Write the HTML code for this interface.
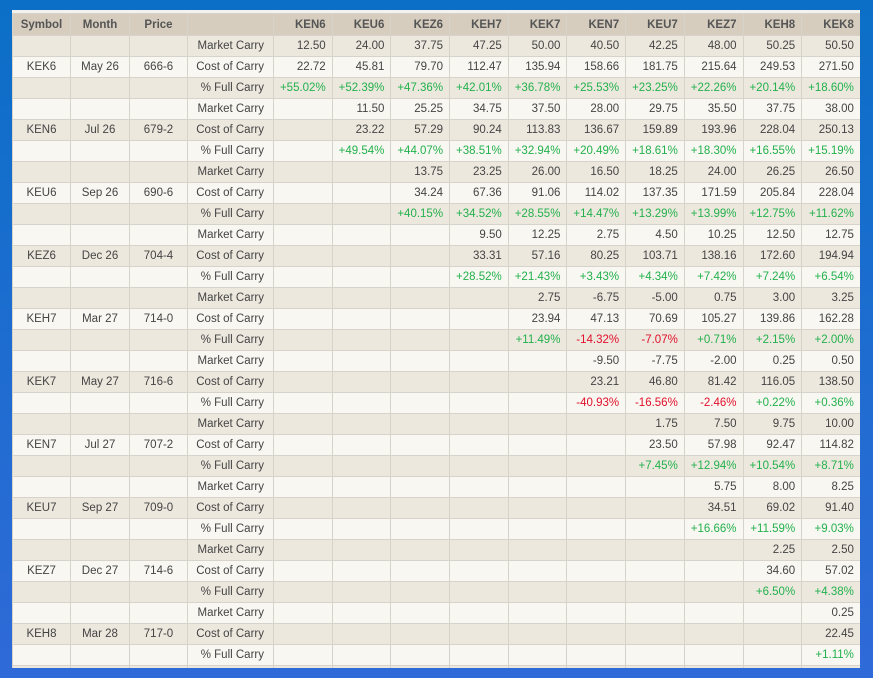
<!DOCTYPE html>
<html><head><meta charset="utf-8"><style>
html,body{margin:0;padding:0}
body{width:873px;height:678px;overflow:hidden;background:linear-gradient(#0b6fc7,#2f6ad8);font-family:"Liberation Sans",sans-serif;}
.card{position:absolute;left:12px;top:10px;width:848px;height:658px;overflow:hidden;background:#f9f7f2;border-top:3px solid #f4f2ee;box-sizing:border-box}
table{border-collapse:collapse;table-layout:fixed;width:848px;font-size:11.5px;color:#444}
td,th{border:1px solid #d8d3ca;height:20px;padding:0 6px 0 0;text-align:right;white-space:nowrap;overflow:hidden}
th{background:#d6cdbf;height:21px;font-weight:bold;color:#555}
tr:nth-child(even) td{background:#ede8de}
tr:nth-child(odd) td{background:#f9f7f2}
td.c,th.c{text-align:center;padding:0}
td.l{padding-right:9px}
.g{color:#22b14c}.r{color:#e0102a}
</style></head><body><div class="card"><table>
<colgroup><col style="width:58px"><col style="width:59px"><col style="width:58px"><col style="width:86px"><col span="10" style="width:58.7px"></colgroup>
<tr><th class="c">Symbol</th><th class="c">Month</th><th class="c">Price</th><th></th><th>KEN6</th><th>KEU6</th><th>KEZ6</th><th>KEH7</th><th>KEK7</th><th>KEN7</th><th>KEU7</th><th>KEZ7</th><th>KEH8</th><th>KEK8</th></tr>
<tr><td class="c"></td><td class="c"></td><td class="c"></td><td class="l">Market Carry</td><td>12.50</td><td>24.00</td><td>37.75</td><td>47.25</td><td>50.00</td><td>40.50</td><td>42.25</td><td>48.00</td><td>50.25</td><td>50.50</td></tr>
<tr><td class="c">KEK6</td><td class="c">May 26</td><td class="c">666-6</td><td class="l">Cost of Carry</td><td>22.72</td><td>45.81</td><td>79.70</td><td>112.47</td><td>135.94</td><td>158.66</td><td>181.75</td><td>215.64</td><td>249.53</td><td>271.50</td></tr>
<tr><td></td><td></td><td></td><td class="l">% Full Carry</td><td class="g">+55.02%</td><td class="g">+52.39%</td><td class="g">+47.36%</td><td class="g">+42.01%</td><td class="g">+36.78%</td><td class="g">+25.53%</td><td class="g">+23.25%</td><td class="g">+22.26%</td><td class="g">+20.14%</td><td class="g">+18.60%</td></tr>
<tr><td></td><td></td><td></td><td class="l">Market Carry</td><td></td><td>11.50</td><td>25.25</td><td>34.75</td><td>37.50</td><td>28.00</td><td>29.75</td><td>35.50</td><td>37.75</td><td>38.00</td></tr>
<tr><td class="c">KEN6</td><td class="c">Jul 26</td><td class="c">679-2</td><td class="l">Cost of Carry</td><td></td><td>23.22</td><td>57.29</td><td>90.24</td><td>113.83</td><td>136.67</td><td>159.89</td><td>193.96</td><td>228.04</td><td>250.13</td></tr>
<tr><td></td><td></td><td></td><td class="l">% Full Carry</td><td></td><td class="g">+49.54%</td><td class="g">+44.07%</td><td class="g">+38.51%</td><td class="g">+32.94%</td><td class="g">+20.49%</td><td class="g">+18.61%</td><td class="g">+18.30%</td><td class="g">+16.55%</td><td class="g">+15.19%</td></tr>
<tr><td></td><td></td><td></td><td class="l">Market Carry</td><td></td><td></td><td>13.75</td><td>23.25</td><td>26.00</td><td>16.50</td><td>18.25</td><td>24.00</td><td>26.25</td><td>26.50</td></tr>
<tr><td class="c">KEU6</td><td class="c">Sep 26</td><td class="c">690-6</td><td class="l">Cost of Carry</td><td></td><td></td><td>34.24</td><td>67.36</td><td>91.06</td><td>114.02</td><td>137.35</td><td>171.59</td><td>205.84</td><td>228.04</td></tr>
<tr><td></td><td></td><td></td><td class="l">% Full Carry</td><td></td><td></td><td class="g">+40.15%</td><td class="g">+34.52%</td><td class="g">+28.55%</td><td class="g">+14.47%</td><td class="g">+13.29%</td><td class="g">+13.99%</td><td class="g">+12.75%</td><td class="g">+11.62%</td></tr>
<tr><td></td><td></td><td></td><td class="l">Market Carry</td><td></td><td></td><td></td><td>9.50</td><td>12.25</td><td>2.75</td><td>4.50</td><td>10.25</td><td>12.50</td><td>12.75</td></tr>
<tr><td class="c">KEZ6</td><td class="c">Dec 26</td><td class="c">704-4</td><td class="l">Cost of Carry</td><td></td><td></td><td></td><td>33.31</td><td>57.16</td><td>80.25</td><td>103.71</td><td>138.16</td><td>172.60</td><td>194.94</td></tr>
<tr><td></td><td></td><td></td><td class="l">% Full Carry</td><td></td><td></td><td></td><td class="g">+28.52%</td><td class="g">+21.43%</td><td class="g">+3.43%</td><td class="g">+4.34%</td><td class="g">+7.42%</td><td class="g">+7.24%</td><td class="g">+6.54%</td></tr>
<tr><td></td><td></td><td></td><td class="l">Market Carry</td><td></td><td></td><td></td><td></td><td>2.75</td><td>-6.75</td><td>-5.00</td><td>0.75</td><td>3.00</td><td>3.25</td></tr>
<tr><td class="c">KEH7</td><td class="c">Mar 27</td><td class="c">714-0</td><td class="l">Cost of Carry</td><td></td><td></td><td></td><td></td><td>23.94</td><td>47.13</td><td>70.69</td><td>105.27</td><td>139.86</td><td>162.28</td></tr>
<tr><td></td><td></td><td></td><td class="l">% Full Carry</td><td></td><td></td><td></td><td></td><td class="g">+11.49%</td><td class="r">-14.32%</td><td class="r">-7.07%</td><td class="g">+0.71%</td><td class="g">+2.15%</td><td class="g">+2.00%</td></tr>
<tr><td></td><td></td><td></td><td class="l">Market Carry</td><td></td><td></td><td></td><td></td><td></td><td>-9.50</td><td>-7.75</td><td>-2.00</td><td>0.25</td><td>0.50</td></tr>
<tr><td class="c">KEK7</td><td class="c">May 27</td><td class="c">716-6</td><td class="l">Cost of Carry</td><td></td><td></td><td></td><td></td><td></td><td>23.21</td><td>46.80</td><td>81.42</td><td>116.05</td><td>138.50</td></tr>
<tr><td></td><td></td><td></td><td class="l">% Full Carry</td><td></td><td></td><td></td><td></td><td></td><td class="r">-40.93%</td><td class="r">-16.56%</td><td class="r">-2.46%</td><td class="g">+0.22%</td><td class="g">+0.36%</td></tr>
<tr><td></td><td></td><td></td><td class="l">Market Carry</td><td></td><td></td><td></td><td></td><td></td><td></td><td>1.75</td><td>7.50</td><td>9.75</td><td>10.00</td></tr>
<tr><td class="c">KEN7</td><td class="c">Jul 27</td><td class="c">707-2</td><td class="l">Cost of Carry</td><td></td><td></td><td></td><td></td><td></td><td></td><td>23.50</td><td>57.98</td><td>92.47</td><td>114.82</td></tr>
<tr><td></td><td></td><td></td><td class="l">% Full Carry</td><td></td><td></td><td></td><td></td><td></td><td></td><td class="g">+7.45%</td><td class="g">+12.94%</td><td class="g">+10.54%</td><td class="g">+8.71%</td></tr>
<tr><td></td><td></td><td></td><td class="l">Market Carry</td><td></td><td></td><td></td><td></td><td></td><td></td><td></td><td>5.75</td><td>8.00</td><td>8.25</td></tr>
<tr><td class="c">KEU7</td><td class="c">Sep 27</td><td class="c">709-0</td><td class="l">Cost of Carry</td><td></td><td></td><td></td><td></td><td></td><td></td><td></td><td>34.51</td><td>69.02</td><td>91.40</td></tr>
<tr><td></td><td></td><td></td><td class="l">% Full Carry</td><td></td><td></td><td></td><td></td><td></td><td></td><td></td><td class="g">+16.66%</td><td class="g">+11.59%</td><td class="g">+9.03%</td></tr>
<tr><td></td><td></td><td></td><td class="l">Market Carry</td><td></td><td></td><td></td><td></td><td></td><td></td><td></td><td></td><td>2.25</td><td>2.50</td></tr>
<tr><td class="c">KEZ7</td><td class="c">Dec 27</td><td class="c">714-6</td><td class="l">Cost of Carry</td><td></td><td></td><td></td><td></td><td></td><td></td><td></td><td></td><td>34.60</td><td>57.02</td></tr>
<tr><td></td><td></td><td></td><td class="l">% Full Carry</td><td></td><td></td><td></td><td></td><td></td><td></td><td></td><td></td><td class="g">+6.50%</td><td class="g">+4.38%</td></tr>
<tr><td></td><td></td><td></td><td class="l">Market Carry</td><td></td><td></td><td></td><td></td><td></td><td></td><td></td><td></td><td></td><td>0.25</td></tr>
<tr><td class="c">KEH8</td><td class="c">Mar 28</td><td class="c">717-0</td><td class="l">Cost of Carry</td><td></td><td></td><td></td><td></td><td></td><td></td><td></td><td></td><td></td><td>22.45</td></tr>
<tr><td></td><td></td><td></td><td class="l">% Full Carry</td><td></td><td></td><td></td><td></td><td></td><td></td><td></td><td></td><td></td><td class="g">+1.11%</td></tr>
<tr><td></td><td></td><td></td><td></td><td></td><td></td><td></td><td></td><td></td><td></td><td></td><td></td><td></td><td></td></tr>
</table></div></body></html>
